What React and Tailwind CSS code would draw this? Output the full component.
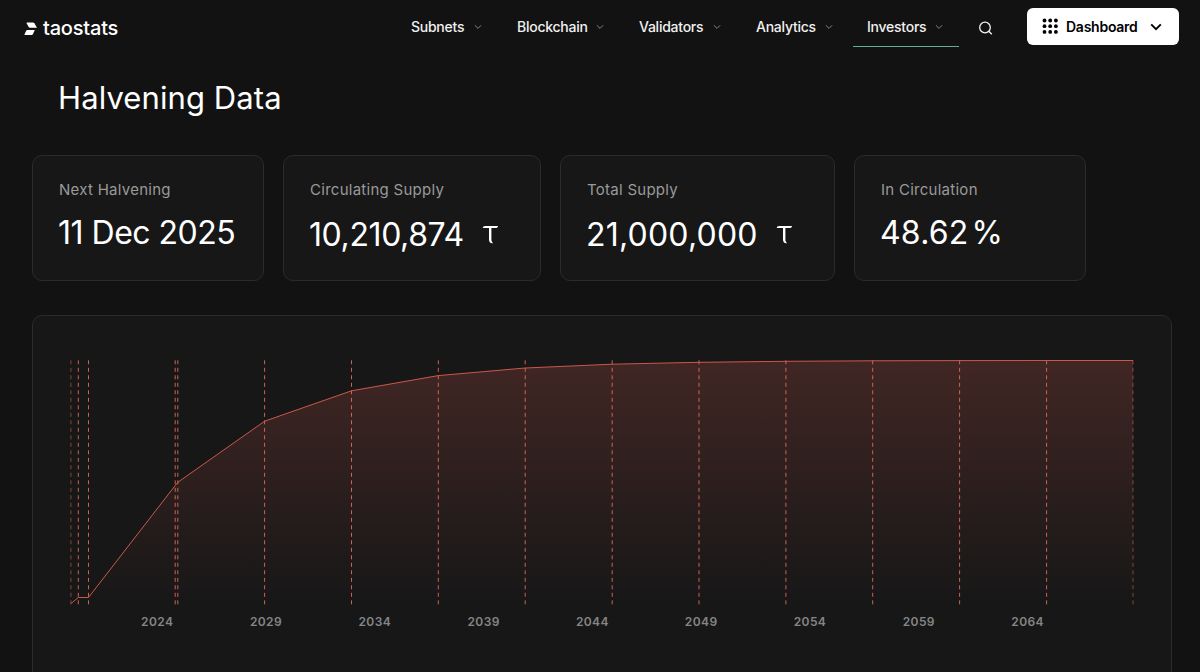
import React from 'react';

const navItems = [
  { label: 'Subnets', width: 'w-[106px]', text: 'w-[53px]' },
  { label: 'Blockchain', width: 'w-[122px]', text: 'w-[69px]' },
  { label: 'Validators', width: 'w-[117px]', text: 'w-[64px]' },
  { label: 'Analytics', width: 'w-[111px]', text: 'w-[59px]' },
  { label: 'Investors', width: 'w-[106px]', text: 'w-[58px]', active: true },
];

const stats = [
  { label: 'Next Halvening', value: '11 Dec 2025', width: 'w-[232px]', spacing: 'tracking-[-0.5px]' },
  { label: 'Circulating Supply', value: '10,210,874', width: 'w-[258px]', spacing: 'tracking-[-0.4px]', tao: true },
  { label: 'Total Supply', value: '21,000,000', width: 'w-[275px]', spacing: 'tracking-[0.2px]', tao: true },
  { label: 'In Circulation', value: '48.62', width: 'w-[232px]', spacing: 'tracking-[0.2px]', percent: true },
];

// Halving points: x position and cumulative supply height
const points = [
  [70.9, 603.6],
  [78.3, 597.5],
  [88.5, 597.5],
  [175.2, 485.5],
  [177.8, 482.3],
  [264.6, 421.2],
  [351.5, 390.8],
  [438.3, 375.6],
  [525.2, 368],
  [612.2, 364.2],
  [699, 362.3],
  [785.9, 361.3],
  [872.7, 360.8],
  [959.6, 360.6],
  [1046.6, 360.5],
  [1133, 360.5],
];

const years = [2024, 2029, 2034, 2039, 2044, 2049, 2054, 2059, 2064];

const linePath = 'M' + points.map((p) => p.join(' ')).join(' L');
const areaPath = `${linePath} L1133 604 L70.9 604 Z`;

const Logo = () => (
  <div className="flex items-center gap-[5px] text-white">
    <svg className="mt-[2px]" width="14" height="14" viewBox="0 0 14 14" fill="currentColor">
      <path d="M3.1 0.6H8.9Q9.8 0.6 10.3 1.3L13 5.8H5.9Q5.1 5.8 4.7 5.1L2.7 1.5Q2.4 0.6 3.1 0.6Z" />
      <path d="M3.3 8H10.8L8.9 12.2Q8.5 13 7.7 13H0.9Q0.2 13 0.5 12.3L2.2 8.7Q2.6 8 3.3 8Z" />
    </svg>
    <span className="text-[20px] leading-6 font-medium tracking-[-0.2px]">taostats</span>
  </div>
);

const NavItem = ({ item }) => (
  <div
    className={`${item.width} flex h-[47px] items-start border-b pt-[17px] pl-[14px] ${
      item.active ? 'border-[#5fae95]' : 'border-transparent'
    }`}
  >
    <span className={`${item.text} whitespace-nowrap text-[14px] leading-5 font-medium tracking-[-0.25px] text-[#f0f0f0]`}>
      {item.label}
    </span>
    <svg className="mt-[7px] ml-[10px]" width="8" height="6" viewBox="0 0 8 6" fill="none" stroke="#858585" strokeWidth="1">
      <path d="M0.9 1.3L4 4.4L7.1 1.3" />
    </svg>
  </div>
);

const Header = () => (
  <header className="flex h-[60px] items-start pl-6">
    <div className="w-[373px] pt-[16px]">
      <Logo />
    </div>
    <nav className="flex">
      {navItems.map((item) => (
        <NavItem key={item.label} item={item} />
      ))}
    </nav>
    <svg className="mt-[21px] ml-[19px]" width="15" height="15" viewBox="0 0 15 15" fill="none" stroke="#f5f5f5" strokeWidth="1.3">
      <circle cx="7" cy="6.5" r="5.3" />
      <path d="M10.8 10.3L13.8 13.3" />
    </svg>
    <button className="mt-2 ml-[34px] flex h-[37px] w-[152px] items-center rounded-md bg-white pl-[15px] text-black">
      <svg width="17" height="17" viewBox="0 0 17 17" fill="currentColor">
        {[2.5, 8.2, 13.9].map((y) =>
          [2.5, 8.2, 13.9].map((x) => <circle key={`${x}-${y}`} cx={x} cy={y} r="1.9" />)
        )}
      </svg>
      <span className="ml-[7px] w-[71px] whitespace-nowrap text-[14px] leading-5 font-semibold tracking-[-0.25px]">Dashboard</span>
      <svg className="ml-[13px]" width="12" height="8" viewBox="0 0 12 8" fill="none" stroke="currentColor" strokeWidth="1.9">
        <path d="M1.2 1.4L6 6.2L10.8 1.4" />
      </svg>
    </button>
  </header>
);

const TaoIcon = () => (
  <svg className="mt-[10px] ml-[18px]" width="17" height="20" viewBox="0 0 17 20" fill="white">
    <path d="M0.7 3C0.9 1.6 1.8 0.9 3.2 0.9H16C15.8 2.3 15 3 13.6 3H9.4V14.6C9.4 16.2 10 17.4 11.2 18.2C8.4 18.6 7 17.2 7 14.5V3H0.7Z" />
  </svg>
);

const StatCard = ({ stat }) => (
  <div className={`${stat.width} h-[126px] rounded-[10px] border border-[#2b2b2b] bg-[#171717] pt-[24px] pl-[26px]`}>
    <p className="text-[15px] leading-5 tracking-[0.27px] text-[#9a9a9a]">{stat.label}</p>
    <div className={`-ml-px flex text-white ${stat.tao ? 'mt-[15px]' : 'mt-[13px]'}`}>
      <span className={`${stat.spacing} whitespace-nowrap text-[32px] leading-10`}>{stat.value}</span>
      {stat.percent && <span className="ml-[3px] text-[32px] leading-10">%</span>}
      {stat.tao && <TaoIcon />}
    </div>
  </div>
);

const SupplyChart = () => (
  <section className="mt-[34px] ml-8 h-[400px] w-[1140px] rounded-[10px] border border-[#2b2b2b] bg-[#171717]">
    <svg className="block" width="1138" height="356" viewBox="33 316 1138 356">
      <defs>
        <linearGradient id="supply" x1="0" y1="0" x2="0" y2="1">
          <stop offset="0" stopColor="#e86458" stopOpacity="0.2" />
          <stop offset="1" stopColor="#e86458" stopOpacity="0" />
        </linearGradient>
      </defs>
      <path d={areaPath} fill="url(#supply)" />
      {points.map(([x], i) => (
        <line
          key={x}
          x1={x}
          x2={x}
          y1="360.3"
          y2="604.5"
          stroke="#e06c58"
          strokeOpacity={i === 0 || i === points.length - 1 ? 0.55 : 0.9}
          strokeWidth="1"
          strokeDasharray="4 3.5"
        />
      ))}
      <path d={linePath} fill="none" stroke="#dc5e50" strokeWidth="0.9" />
      {years.map((year, i) => (
        <text
          key={year}
          x={157.2 + i * 108.8}
          y="625.7"
          textAnchor="middle"
          className="fill-[#858585] text-[12px] font-semibold tracking-[0.4px]"
        >
          {year}
        </text>
      ))}
    </svg>
  </section>
);

const App = () => {
  return (
    <div className="h-[672px] w-[1200px] overflow-hidden bg-[#121212] font-['Inter',sans-serif]">
      <Header />
      <h1 className="mt-[18px] ml-[58px] text-[31px] leading-10 tracking-[0.1px] text-white">Halvening Data</h1>
      <div className="mt-[37px] ml-8 flex gap-[19px]">
        {stats.map((stat) => (
          <StatCard key={stat.label} stat={stat} />
        ))}
      </div>
      <SupplyChart />
    </div>
  );
};

export default App;
